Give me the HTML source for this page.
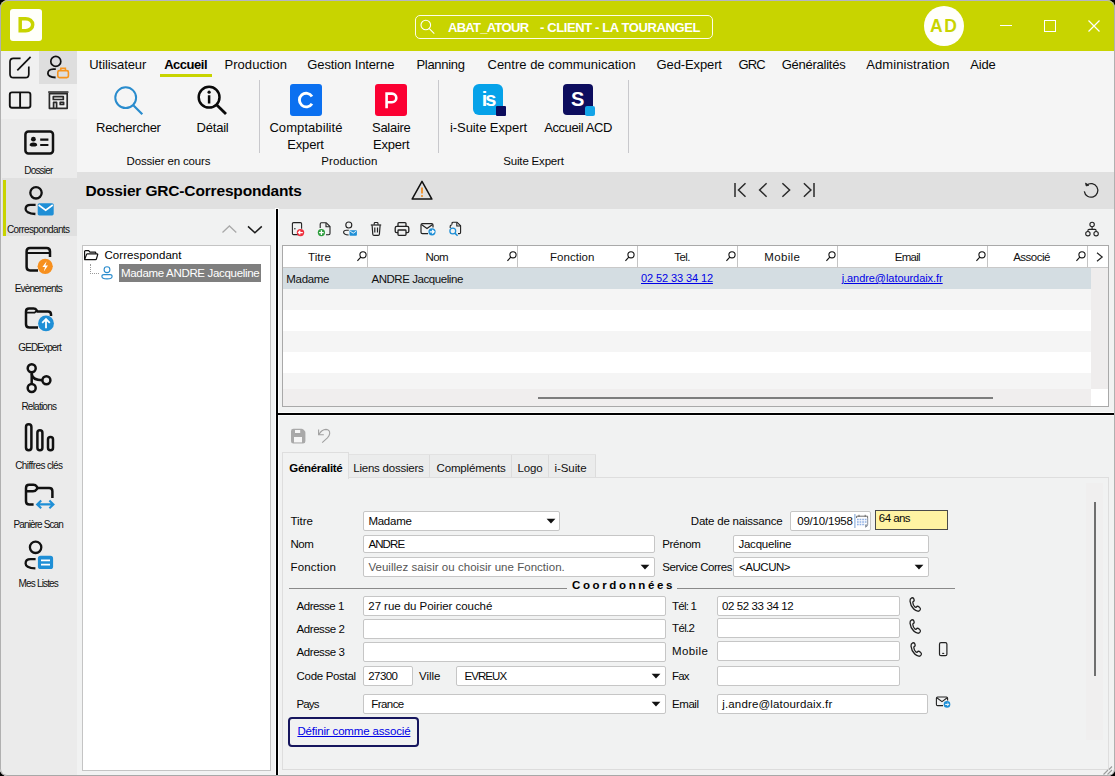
<!DOCTYPE html>
<html><head><meta charset="utf-8"><title>Dossier GRC-Correspondants</title>
<style>
html,body{margin:0;padding:0;}
body{width:1115px;height:776px;overflow:hidden;background:#000;font-family:"Liberation Sans",sans-serif;}
#win{position:absolute;left:0;top:0;width:1115px;height:776px;overflow:hidden;background:#f1f2f2;border-radius:8px 8px 7px 7px;}
.b{position:absolute;box-sizing:border-box;display:block;}
.t{position:absolute;white-space:pre;line-height:20px;font-family:"Liberation Sans",sans-serif;}
.f{position:absolute;box-sizing:border-box;background:#fff;border:1px solid #c6c6c6;border-radius:2px;}
u{text-decoration:underline;}
</style></head><body><div id="win">
<div class="b" style="left:0px;top:0px;width:1115px;height:51px;background:#c8d400;"></div>
<div class="b" style="left:0px;top:51px;width:77px;height:725px;background:#ebebeb;"></div>
<div class="b" style="left:0px;top:51px;width:77px;height:68px;background:#f0f0f0;"></div>
<div class="b" style="left:39px;top:51px;width:38px;height:33px;background:#dedede;"></div>
<div class="b" style="left:77px;top:51px;width:1038px;height:121px;background:#f5f5f5;"></div>
<div class="b" style="left:77px;top:172px;width:1038px;height:37px;background:#e0e0e0;"></div>
<div class="b" style="left:0px;top:0px;width:1115px;height:776px;border:1px solid #b4b4c4;border-radius:8px 8px 7px 7px;border-bottom-color:#a8a8a8;border-left-color:#b0b0b0;border-right-color:#b0b0b0;z-index:50;pointer-events:none;"></div>
<div class="b" style="left:10px;top:9px;width:32px;height:32px;background:#fffffa;border-radius:3px;"></div>
<svg class="b" style="left:10px;top:9px;" width="32" height="32" viewBox="0 0 32 32" preserveAspectRatio="none" fill="none"><path d="M10.2 9.65 H15.7 A7 6.02 0 0 1 15.7 21.7 H10.2 Z" stroke="#c8d400" stroke-width="3.5" stroke-linejoin="miter"/></svg>
<div class="b" style="left:415px;top:15px;width:298px;height:24px;border:1px solid #fdfde8;border-radius:5px;"></div>
<svg class="b" style="left:419px;top:18px;" width="18" height="18" viewBox="0 0 18 18" preserveAspectRatio="none" fill="none"><circle cx="6.8" cy="7" r="4.8" stroke="#fff" stroke-width="1.1"/><path d="M10.3 10.6 L15.3 15.6" stroke="#fff" stroke-width="1.1"/></svg>
<span class="t" style="left:448.00px;top:16px;line-height:23px;font-size:13px;color:#fff;font-weight:bold;letter-spacing:-0.708px;">ABAT_ATOUR</span>
<span class="t" style="left:540.00px;top:16px;line-height:23px;font-size:13px;color:#fff;font-weight:bold;letter-spacing:-0.386px;">- CLIENT - LA TOURANGEL</span>
<div class="b" style="left:924px;top:6px;width:40px;height:40px;background:#fffffb;border-radius:50%;"></div>
<span class="t" style="left:929.90px;top:12px;line-height:28px;font-size:17.5px;color:#c8d400;font-weight:bold;letter-spacing:1.750px;">AD</span>
<div class="b" style="left:1000px;top:25px;width:12px;height:1px;background:#fff;"></div>
<div class="b" style="left:1044px;top:20px;width:12px;height:12px;border:1px solid #fff;"></div>
<svg class="b" style="left:1087px;top:19px;" width="14" height="14" viewBox="0 0 14 14" preserveAspectRatio="none" fill="none"><path d="M1.5 1.5 L12.5 12.5 M12.5 1.5 L1.5 12.5" stroke="#fff" stroke-width="1.2"/></svg>
<span class="t" style="left:89.30px;top:53px;line-height:23px;font-size:13px;color:#080808;letter-spacing:-0.075px;">Utilisateur</span>
<span class="t" style="left:224.50px;top:53px;line-height:23px;font-size:13px;color:#080808;letter-spacing:0.042px;">Production</span>
<span class="t" style="left:307.30px;top:53px;line-height:23px;font-size:13px;color:#080808;letter-spacing:-0.127px;">Gestion Interne</span>
<span class="t" style="left:416.50px;top:53px;line-height:23px;font-size:13px;color:#080808;letter-spacing:-0.318px;">Planning</span>
<span class="t" style="left:487.50px;top:53px;line-height:23px;font-size:13px;color:#080808;">Centre de communication</span>
<span class="t" style="left:656.60px;top:53px;line-height:23px;font-size:13px;color:#080808;letter-spacing:-0.122px;">Ged-Expert</span>
<span class="t" style="left:738.60px;top:53px;line-height:23px;font-size:13px;color:#080808;letter-spacing:-0.900px;">GRC</span>
<span class="t" style="left:781.70px;top:53px;line-height:23px;font-size:13px;color:#080808;letter-spacing:-0.250px;">Généralités</span>
<span class="t" style="left:866.30px;top:53px;line-height:23px;font-size:13px;color:#080808;letter-spacing:0.071px;">Administration</span>
<span class="t" style="left:970.20px;top:53px;line-height:23px;font-size:13px;color:#080808;letter-spacing:-0.167px;">Aide</span>
<span class="t" style="left:164.20px;top:53px;line-height:23px;font-size:13px;color:#000;font-weight:bold;letter-spacing:-0.475px;">Accueil</span>
<div class="b" style="left:160px;top:74px;width:52px;height:3px;background:#c8d400;"></div>
<div class="b" style="left:259px;top:80px;width:1px;height:73px;background:#c8c8cc;"></div>
<div class="b" style="left:438px;top:80px;width:1px;height:73px;background:#c8c8cc;"></div>
<div class="b" style="left:628px;top:80px;width:1px;height:73px;background:#c8c8cc;"></div>
<span class="t" style="left:96.00px;top:116px;line-height:23px;font-size:13px;color:#080808;letter-spacing:-0.250px;">Rechercher</span>
<span class="t" style="left:196.60px;top:116px;line-height:23px;font-size:13px;color:#080808;letter-spacing:-0.230px;">Détail</span>
<span class="t" style="left:269.40px;top:116px;line-height:23px;font-size:13px;color:#080808;letter-spacing:0.077px;">Comptabilité</span>
<span class="t" style="left:287.30px;top:133px;line-height:23px;font-size:13px;color:#080808;letter-spacing:-0.185px;">Expert</span>
<span class="t" style="left:372.00px;top:116px;line-height:23px;font-size:13px;color:#080808;letter-spacing:-0.283px;">Salaire</span>
<span class="t" style="left:372.90px;top:133px;line-height:23px;font-size:13px;color:#080808;letter-spacing:-0.165px;">Expert</span>
<span class="t" style="left:450.00px;top:116px;line-height:23px;font-size:13px;color:#080808;letter-spacing:-0.077px;">i-Suite Expert</span>
<span class="t" style="left:544.20px;top:116px;line-height:23px;font-size:13px;color:#080808;letter-spacing:-0.415px;">Accueil ACD</span>
<span class="t" style="left:126.50px;top:151px;line-height:20px;font-size:11.5px;color:#080808;letter-spacing:-0.157px;">Dossier en cours</span>
<span class="t" style="left:321.30px;top:151px;line-height:20px;font-size:11.5px;color:#080808;letter-spacing:0.122px;">Production</span>
<span class="t" style="left:503.30px;top:151px;line-height:20px;font-size:11.5px;color:#080808;letter-spacing:-0.184px;">Suite Expert</span>
<svg class="b" style="left:112px;top:84px;" width="34" height="34" viewBox="0 0 34 34" preserveAspectRatio="none" fill="none"><circle cx="13.7" cy="13.7" r="10.4" stroke="#2a8ccd" stroke-width="2"/><path d="M21.3 21.3 L30.3 30.3" stroke="#2a8ccd" stroke-width="2.2"/></svg>
<svg class="b" style="left:195px;top:84px;" width="34" height="34" viewBox="0 0 34 34" preserveAspectRatio="none" fill="none"><circle cx="14.1" cy="13.2" r="10.4" stroke="#0a0a0a" stroke-width="2.5"/><path d="M21.8 21 L31 30" stroke="#0a0a0a" stroke-width="2.8"/><circle cx="14.1" cy="8.2" r="1.6" fill="#0a0a0a"/><path d="M14.1 11.2 V19.4" stroke="#0a0a0a" stroke-width="2.5"/></svg>
<div class="b" style="left:290px;top:84px;width:32px;height:32px;background:#0b70f0;border-radius:3px;"></div>
<svg class="b" style="left:290px;top:84px;" width="32" height="32" viewBox="0 0 32 32" preserveAspectRatio="none" fill="none"><path d="M21.97 12.5 A6.8 6.8 0 1 0 21.97 19.7" stroke="#fff" stroke-width="2.9"/></svg>
<div class="b" style="left:375px;top:84px;width:32px;height:32px;background:#fb0032;border-radius:3px;"></div>
<svg class="b" style="left:375px;top:84px;" width="32" height="32" viewBox="0 0 32 32" preserveAspectRatio="none" fill="none"><path d="M11.6 24.2 V9.6 H17 A4.3 4.3 0 0 1 17 18.2 H11.6" stroke="#fff" stroke-width="2.6"/></svg>
<div class="b" style="left:473px;top:84px;width:30px;height:31px;background:#06a2e9;border-radius:6px;"></div>
<span class="t" style="left:481.80px;top:84px;line-height:30px;font-size:20px;color:#fff;font-weight:bold;letter-spacing:-2.000px;">is</span>
<div class="b" style="left:496px;top:106px;width:10px;height:10px;background:#0c0c5c;border-radius:1px;"></div>
<div class="b" style="left:563px;top:84px;width:30px;height:31px;background:#0d0d5e;border-radius:4px;"></div>
<span class="t" style="left:571.00px;top:84px;line-height:30px;font-size:20px;color:#fff;font-weight:bold;">S</span>
<div class="b" style="left:585px;top:106px;width:10px;height:10px;background:#14a4e8;border-radius:2px;"></div>
<span class="t" style="left:85.50px;top:178px;line-height:25px;font-size:15.5px;color:#000;font-weight:bold;letter-spacing:-0.160px;">Dossier GRC-Correspondants</span>
<svg class="b" style="left:410px;top:179px;" width="24" height="22" viewBox="0 0 24 22" preserveAspectRatio="none" fill="none"><path d="M12 2.3 L21.9 20.1 H2.1 Z" stroke="#111" stroke-width="1.5" stroke-linejoin="round"/><path d="M12 8.4 V14.6" stroke="#f08a1c" stroke-width="1.7"/><circle cx="12" cy="17.1" r="1" fill="#f08a1c"/></svg>
<svg class="b" style="left:730px;top:180px;" width="90" height="20" viewBox="0 0 90 20" preserveAspectRatio="none" fill="none"><g stroke="#2a2a2a" stroke-width="1.5" fill="none"><path d="M5 3 V17"/><path d="M15.5 3.3 L8.5 10 L15.5 16.7"/><path d="M36.6 3.3 L29.6 10 L36.6 16.7"/><path d="M52.4 3.3 L59.6 10 L52.4 16.7"/><path d="M73.9 3.3 L80.9 10 L73.9 16.7"/><path d="M84 3 V17"/></g></svg>
<svg class="b" style="left:1081px;top:180px;" width="20" height="20" viewBox="0 0 20 20" preserveAspectRatio="none" fill="none"><path d="M5.6 5.2 A6.8 6.8 0 1 1 3.3 11.4" stroke="#222" stroke-width="1.3"/><path d="M4.5 3.1 L5.2 6 L7.9 5.2 Z" fill="#222" stroke="#222" stroke-width="0.8" stroke-linejoin="round"/></svg>
<svg class="b" style="left:6px;top:54px;" width="28" height="28" viewBox="0 0 28 28" preserveAspectRatio="none" fill="none"><path d="M22.8 12.4 V20.2 Q22.8 23.6 19.4 23.6 H7.4 Q4 23.6 4 20.2 V7.8 Q4 4.4 7.4 4.4 H14.6" stroke="#111" stroke-width="1.7"/><path d="M11.3 16.4 L24.6 2.8" stroke="#111" stroke-width="1.7"/></svg>
<svg class="b" style="left:44px;top:54px;" width="28" height="28" viewBox="0 0 28 28" preserveAspectRatio="none" fill="none"><circle cx="11.8" cy="7.4" r="5" stroke="#111" stroke-width="1.7"/><path d="M11.8 15.2 H9.4 Q3.7 15.4 3.9 19.6 Q4.1 23 11.6 23.5" stroke="#111" stroke-width="1.8"/><rect x="13.8" y="16.6" width="10.6" height="7" rx="1.6" stroke="#f7941d" stroke-width="1.6"/><path d="M16.8 16.4 V14.2 H21.4 V16.4" stroke="#f7941d" stroke-width="1.5"/></svg>
<svg class="b" style="left:6px;top:88px;" width="28" height="24" viewBox="0 0 28 24" preserveAspectRatio="none" fill="none"><rect x="3.8" y="4.4" width="20.6" height="15.4" rx="2.2" stroke="#111" stroke-width="1.9"/><path d="M14.1 4.6 V19.6" stroke="#111" stroke-width="1.9"/></svg>
<svg class="b" style="left:44px;top:88px;" width="28" height="24" viewBox="0 0 28 24" preserveAspectRatio="none" fill="none"><g stroke="#2a2a2a" stroke-width="1.7" stroke-linecap="round" stroke-linejoin="round"><path d="M4.8 4 H23.8"/><path d="M5.4 5.6 H23.2 V20.3 H5.4 Z"/><rect x="9.3" y="8.7" width="10" height="2.8"/><path d="M9.6 20 V14.4 H12.6 V20"/><rect x="16.2" y="14.3" width="3.4" height="2.2"/></g></svg>
<div class="b" style="left:2px;top:178px;width:75px;height:58px;background:#e0e0e0;"></div>
<div class="b" style="left:3px;top:180px;width:3px;height:56px;background:#c8d400;"></div>
<svg class="b" style="left:20px;top:126.6px;" width="40" height="32" viewBox="0 0 40 32" preserveAspectRatio="none" fill="none"><rect x="5.4" y="4.6" width="27.6" height="22" rx="3" stroke="#111" stroke-width="2.5"/><circle cx="13.4" cy="12.2" r="2.4" fill="#111"/><path d="M9.6 18.4 Q9.6 15.6 13.4 15.6 Q17.2 15.6 17.2 18.4 Q13.4 20.8 9.6 18.4 Z" fill="#111"/><path d="M20.2 12.7 H28.4 M20.2 18 H28.4" stroke="#111" stroke-width="2.2"/></svg>
<svg class="b" style="left:20px;top:182px;" width="40" height="38" viewBox="0 0 40 38" preserveAspectRatio="none" fill="none"><circle cx="16" cy="10.8" r="5.7" stroke="#111" stroke-width="2.3"/><path d="M15.6 22.8 H10.6 Q5.6 22.8 5.6 27 Q5.6 31.4 15.4 32" stroke="#111" stroke-width="2.3"/><rect x="17.7" y="21.2" width="16" height="12.2" rx="1.6" fill="#1f8fd6"/><path d="M18.6 23 L25.7 28.2 L32.8 23" stroke="#fff" stroke-width="1.6"/></svg>
<svg class="b" style="left:20px;top:242px;" width="40" height="36" viewBox="0 0 40 36" preserveAspectRatio="none" fill="none"><path d="M18 28.4 H10 Q6.6 28.4 6.6 25 V9.4 Q6.6 6 10 6 H26.6 Q30 6 30 9.4 V15" stroke="#111" stroke-width="2.5"/><path d="M6.8 11 H29.8" stroke="#111" stroke-width="2"/><circle cx="25.2" cy="24.3" r="7.6" fill="#f7901e"/><path d="M26.6 19.2 L22.4 25 H25 L23.8 29.4 L28 23.4 H25.4 Z" fill="#fff"/></svg>
<svg class="b" style="left:20px;top:302px;" width="40" height="36" viewBox="0 0 40 36" preserveAspectRatio="none" fill="none"><path d="M18 25.6 H9.4 Q6 25.6 6 22.2 V9.4 Q6 6.6 9 6.6 H13.6 Q15.6 6.6 16.6 8.2 L17.4 9.4 H28 Q31 9.4 31 12.4 V14" stroke="#111" stroke-width="2.5"/><path d="M6.2 10.6 H14.6 L17.2 8.4" stroke="#111" stroke-width="1.8"/><circle cx="26" cy="21.4" r="7.9" fill="#1f8fd6"/><path d="M26 26.2 V17.2 M22.2 20.8 L26 17 L29.8 20.8" stroke="#fff" stroke-width="1.8"/></svg>
<svg class="b" style="left:20px;top:360px;" width="40" height="36" viewBox="0 0 40 36" preserveAspectRatio="none" fill="none"><circle cx="11.7" cy="8.2" r="4" stroke="#111" stroke-width="2.5"/><circle cx="11.7" cy="28" r="4" stroke="#111" stroke-width="2.5"/><circle cx="26.4" cy="20.2" r="4" stroke="#111" stroke-width="2.5"/><path d="M11.7 12.4 V23.8" stroke="#111" stroke-width="2.5"/><path d="M11.7 14 Q12.4 20.2 22.2 20.2" stroke="#111" stroke-width="2.5"/></svg>
<svg class="b" style="left:20px;top:418px;" width="40" height="38" viewBox="0 0 40 38" preserveAspectRatio="none" fill="none"><rect x="6" y="6.2" width="5.4" height="26" rx="2.7" stroke="#111" stroke-width="2.5"/><rect x="17.4" y="12.2" width="5" height="20" rx="2.5" stroke="#111" stroke-width="2.5"/><rect x="28" y="19" width="5" height="13.2" rx="2.5" stroke="#111" stroke-width="2.5"/></svg>
<svg class="b" style="left:20px;top:478px;" width="40" height="36" viewBox="0 0 40 36" preserveAspectRatio="none" fill="none"><path d="M13.6 26.6 H9.4 Q6 26.6 6 23.2 V10 Q6 6.8 9.2 6.8 H13.4 Q15.6 6.8 16.6 8.4 L17.6 10 H29.2 Q32.4 10 32.4 13.2 V20" stroke="#111" stroke-width="2.5"/><path d="M6.2 13.2 H13 Q15.4 13.2 16.4 11.6 L17.4 10.2" stroke="#111" stroke-width="2.5"/><path d="M17.4 26.4 H33 M21.2 22.6 L17.2 26.4 L21.2 30.2 M29.4 22.6 L33.4 26.4 L29.4 30.2" stroke="#1f8fd6" stroke-width="2.1"/></svg>
<svg class="b" style="left:20px;top:536px;" width="40" height="38" viewBox="0 0 40 38" preserveAspectRatio="none" fill="none"><circle cx="15.6" cy="11.3" r="5.7" stroke="#111" stroke-width="2.3"/><path d="M15.6 23.2 H10.6 Q5.6 23.2 5.6 27.4 Q5.6 31.8 15.4 32.4" stroke="#111" stroke-width="2.3"/><rect x="17.9" y="19.8" width="15.2" height="13.2" rx="2.6" fill="#1f8fd6"/><path d="M21 24.4 H30 M21 28.6 H30" stroke="#fff" stroke-width="1.9"/></svg>
<span class="t" style="left:24.30px;top:161px;line-height:19px;font-size:10px;color:#111;letter-spacing:-0.829px;">Dossier</span>
<span class="t" style="left:7.00px;top:220px;line-height:19px;font-size:10px;color:#111;letter-spacing:-0.625px;">Correspondants</span>
<span class="t" style="left:14.70px;top:279px;line-height:19px;font-size:10px;color:#111;letter-spacing:-0.847px;">Evènements</span>
<span class="t" style="left:18.30px;top:338px;line-height:19px;font-size:10px;color:#111;letter-spacing:-0.900px;">GEDExpert</span>
<span class="t" style="left:21.40px;top:397px;line-height:19px;font-size:10px;color:#111;letter-spacing:-0.769px;">Relations</span>
<span class="t" style="left:15.20px;top:456px;line-height:19px;font-size:10px;color:#111;letter-spacing:-0.581px;">Chiffres clés</span>
<span class="t" style="left:13.60px;top:515px;line-height:19px;font-size:10px;color:#111;letter-spacing:-0.900px;">Panière Scan</span>
<span class="t" style="left:18.60px;top:574px;line-height:19px;font-size:10px;color:#111;letter-spacing:-0.839px;">Mes Listes</span>
<div class="b" style="left:275px;top:208px;width:4px;height:567px;background:#fcfcfc;"></div>
<div class="b" style="left:278px;top:412px;width:836px;height:4px;background:#fcfcfc;"></div>
<div class="b" style="left:276px;top:209px;width:2px;height:566px;background:#000;"></div>
<div class="b" style="left:278px;top:413px;width:836px;height:2px;background:#000;"></div>
<svg class="b" style="left:220px;top:222px;" width="44" height="14" viewBox="0 0 44 14" preserveAspectRatio="none" fill="none"><path d="M2.5 10.4 L9.4 4 L16.3 10.4" stroke="#a9a9a9" stroke-width="1.3"/><path d="M28 4.4 L34.9 10.8 L41.8 4.4" stroke="#1c1c1c" stroke-width="1.5"/></svg>
<div class="b" style="left:82px;top:245px;width:189px;height:526px;background:#fff;border:1px solid #c4c4c4;"></div>
<svg class="b" style="left:82px;top:248px;" width="18" height="14" viewBox="0 0 18 14" preserveAspectRatio="none" fill="none"><path d="M2.6 11.2 V3.6 Q2.6 2.6 3.6 2.6 H6.6 L8 4.2 H13 Q13.8 4.2 13.8 5 V5.8" stroke="#111" stroke-width="1.2"/><path d="M2.6 11.6 L4.6 6.4 Q4.8 5.9 5.4 5.9 H15.2 Q15.9 5.9 15.7 6.6 L14.4 11 Q14.2 11.7 13.5 11.7 H3 Z" stroke="#111" stroke-width="1.2" stroke-linejoin="round"/></svg>
<span class="t" style="left:104.40px;top:245px;line-height:20px;font-size:11.5px;color:#000;letter-spacing:0.090px;">Correspondant</span>
<div class="b" style="left:90px;top:264px;width:1px;height:10px;border-left:1px dotted #9a9a9a;"></div>
<div class="b" style="left:90px;top:273px;width:9px;height:1px;border-top:1px dotted #9a9a9a;"></div>
<svg class="b" style="left:100px;top:265px;" width="14" height="16" viewBox="0 0 14 16" preserveAspectRatio="none" fill="none"><circle cx="7" cy="4.7" r="2.9" stroke="#2a8ccd" stroke-width="1.1"/><path d="M1.9 11.4 Q1.9 9.6 4 9.6 H10 Q12.1 9.6 12.1 11.4 Q12.1 13.9 7 13.9 Q1.9 13.9 1.9 11.4 Z" stroke="#2a8ccd" stroke-width="1.1"/></svg>
<div class="b" style="left:119px;top:264px;width:142px;height:18px;background:#7f7f7f;"></div>
<span class="t" style="left:121.00px;top:263px;line-height:20px;font-size:11.5px;color:#fff;letter-spacing:-0.320px;">Madame ANDRE Jacqueline</span>
<svg class="b" style="left:289px;top:220px;" width="18" height="18" viewBox="0 0 18 18" preserveAspectRatio="none" fill="none"><path d="M9.4 14.6 H4.6 Q3.4 14.6 3.4 13.4 V3.8 Q3.4 2.6 4.6 2.6 H11.4 Q12.6 2.6 12.6 3.8 V8.8" stroke="#222" stroke-width="1.1"/><circle cx="5.9" cy="8.7" r="0.75" fill="#222"/><circle cx="11.5" cy="12.6" r="3.7" fill="#ee2f3c"/><path d="M13.8 12.6 H9.8 M11.3 10.8 L9.5 12.6 L11.3 14.4" stroke="#fff" stroke-width="1.3"/></svg>
<svg class="b" style="left:316px;top:220px;" width="18" height="18" viewBox="0 0 18 18" preserveAspectRatio="none" fill="none"><path d="M4.2 8 V3.9 Q4.2 2.7 5.4 2.7 H10.2 L14 6.5 V13.6 Q14 14.8 12.8 14.8 H10" stroke="#222" stroke-width="1.1"/><path d="M10 2.9 V6.7 H13.8" stroke="#222" stroke-width="1.1"/><circle cx="5.4" cy="12.6" r="3.6" fill="#2e9e3e"/><path d="M5.4 10.3 V14.9 M3.1 12.6 H7.7" stroke="#fff" stroke-width="1.3"/></svg>
<svg class="b" style="left:342px;top:220px;" width="18" height="18" viewBox="0 0 18 18" preserveAspectRatio="none" fill="none"><circle cx="6.8" cy="5" r="3" stroke="#222" stroke-width="1.1"/><path d="M6.8 10.2 H4.4 Q1.6 10.2 1.6 12.2 Q1.6 14.6 6.6 15" stroke="#222" stroke-width="1.1"/><rect x="7.5" y="10.2" width="7.4" height="5.5" rx="0.8" fill="#1f8fd6"/><path d="M8.2 11.2 L11.2 13.2 L14.2 11.2" stroke="#fff" stroke-width="0.9"/></svg>
<svg class="b" style="left:368px;top:220px;" width="18" height="18" viewBox="0 0 18 18" preserveAspectRatio="none" fill="none"><path d="M2.8 5 H13.2" stroke="#222" stroke-width="1.2"/><path d="M6.2 4.8 V3.4 Q6.2 2.5 7.1 2.5 H9.1 Q10 2.5 10 3.4 V4.8" stroke="#222" stroke-width="1.1"/><path d="M4.1 5.2 L4.8 14.2 Q4.9 15.3 6 15.3 H10.2 Q11.3 15.3 11.4 14.2 L12.1 5.2" stroke="#222" stroke-width="1.2"/><path d="M6.8 7.6 V12.6 M9.5 7.6 V12.6" stroke="#222" stroke-width="1.2"/></svg>
<svg class="b" style="left:393px;top:220px;" width="18" height="18" viewBox="0 0 18 18" preserveAspectRatio="none" fill="none"><path d="M5 6.2 V3.6 Q5 2.6 6 2.6 H12 Q13 2.6 13 3.6 V6.2" stroke="#222" stroke-width="1.3"/><path d="M5 12.6 H3.6 Q2.2 12.6 2.2 11.2 V8 Q2.2 6.4 3.8 6.4 H14.2 Q15.8 6.4 15.8 8 V11.2 Q15.8 12.6 14.4 12.6 H13" stroke="#222" stroke-width="1.3"/><rect x="5" y="10" width="8" height="5.4" rx="0.8" stroke="#222" stroke-width="1.3"/></svg>
<svg class="b" style="left:419px;top:220px;" width="18" height="18" viewBox="0 0 18 18" preserveAspectRatio="none" fill="none"><path d="M9 13.6 H3.4 Q2 13.6 2 12.2 V5 Q2 3.6 3.4 3.6 H12.6 Q14 3.6 14 5 V7.4" stroke="#222" stroke-width="1.2"/><path d="M2.4 4.4 L8 8.6 L13.6 4.4" stroke="#222" stroke-width="1.2"/><circle cx="13" cy="11.8" r="3.6" fill="#1f8fd6"/><path d="M10.8 11.8 H14.8 M13.2 10 L15 11.8 L13.2 13.6" stroke="#fff" stroke-width="1.3"/></svg>
<svg class="b" style="left:446px;top:220px;" width="18" height="18" viewBox="0 0 18 18" preserveAspectRatio="none" fill="none"><path d="M6 4.4 V3.4 Q6 2.2 7.2 2.2 H11 L14.6 5.8 V12.4 Q14.6 13.6 13.4 13.6 H12" stroke="#222" stroke-width="1.1"/><path d="M10.8 2.4 V6 H14.4" stroke="#222" stroke-width="1.1"/><path d="M4.2 8 V6 Q4.2 5 5.2 5 H6" stroke="#222" stroke-width="1.1"/><circle cx="6.8" cy="11" r="2.9" stroke="#1f8fd6" stroke-width="1.3"/><path d="M8.9 13.1 L11.6 15.8" stroke="#1f8fd6" stroke-width="1.5"/></svg>
<svg class="b" style="left:1084px;top:220px;" width="18" height="18" viewBox="0 0 18 18" preserveAspectRatio="none" fill="none"><g stroke="#222" stroke-width="1.1"><circle cx="8.1" cy="4.5" r="2.2"/><circle cx="3.9" cy="13.7" r="2.2"/><circle cx="12.1" cy="13.7" r="2.2"/><path d="M8.1 6.8 V9.4 M3.9 11.4 V10.6 Q3.9 9.4 5.1 9.4 H11 Q12.1 9.4 12.1 10.6 V11.4"/></g></svg>
<div class="b" style="left:282px;top:245px;width:827px;height:162px;background:#fff;border:1px solid #a9a9a9;"></div>
<div class="b" style="left:283px;top:267px;width:808px;height:22px;background:#d4dde2;"></div>
<div class="b" style="left:283px;top:289px;width:808px;height:21px;background:#f5f5f5;"></div>
<div class="b" style="left:283px;top:331px;width:808px;height:21px;background:#f5f5f5;"></div>
<div class="b" style="left:283px;top:373px;width:808px;height:16px;background:#f5f5f5;"></div>
<div class="b" style="left:1091px;top:267px;width:17px;height:122px;background:#efeded;"></div>
<div class="b" style="left:283px;top:389px;width:808px;height:17px;background:#f0eeee;"></div>
<div class="b" style="left:538px;top:397px;width:455px;height:2px;background:#7d7d7d;"></div>
<div class="b" style="left:283px;top:267px;width:825px;height:1px;background:#c9c9c9;"></div>
<div class="b" style="left:367px;top:246px;width:1px;height:21px;background:#c4c4c4;"></div>
<div class="b" style="left:517px;top:246px;width:1px;height:21px;background:#c4c4c4;"></div>
<div class="b" style="left:637px;top:246px;width:1px;height:21px;background:#c4c4c4;"></div>
<div class="b" style="left:737px;top:246px;width:1px;height:21px;background:#c4c4c4;"></div>
<div class="b" style="left:837px;top:246px;width:1px;height:21px;background:#c4c4c4;"></div>
<div class="b" style="left:987px;top:246px;width:1px;height:21px;background:#c4c4c4;"></div>
<div class="b" style="left:1087px;top:246px;width:1px;height:21px;background:#c4c4c4;"></div>
<span class="t" style="left:308.00px;top:247px;line-height:20px;font-size:11.5px;color:#111;letter-spacing:0.069px;">Titre</span>
<span class="t" style="left:425.60px;top:247px;line-height:20px;font-size:11.5px;color:#111;letter-spacing:-0.625px;">Nom</span>
<span class="t" style="left:550.00px;top:247px;line-height:20px;font-size:11.5px;color:#111;letter-spacing:0.039px;">Fonction</span>
<span class="t" style="left:674.20px;top:247px;line-height:20px;font-size:11.5px;color:#111;letter-spacing:-0.558px;">Tel.</span>
<span class="t" style="left:764.30px;top:247px;line-height:20px;font-size:11.5px;color:#111;letter-spacing:0.325px;">Mobile</span>
<span class="t" style="left:894.70px;top:247px;line-height:20px;font-size:11.5px;color:#111;letter-spacing:-0.713px;">Email</span>
<span class="t" style="left:1013.20px;top:247px;line-height:20px;font-size:11.5px;color:#111;letter-spacing:-0.508px;">Associé</span>
<svg class="b" style="left:355.6px;top:250px;" width="12" height="12" viewBox="0 0 12 12" preserveAspectRatio="none" fill="none"><circle cx="7" cy="4.8" r="3.1" stroke="#111" stroke-width="1.1"/><path d="M4.8 7.2 L1.4 10.8" stroke="#111" stroke-width="1.2"/></svg>
<svg class="b" style="left:505.6px;top:250px;" width="12" height="12" viewBox="0 0 12 12" preserveAspectRatio="none" fill="none"><circle cx="7" cy="4.8" r="3.1" stroke="#111" stroke-width="1.1"/><path d="M4.8 7.2 L1.4 10.8" stroke="#111" stroke-width="1.2"/></svg>
<svg class="b" style="left:624.2px;top:250px;" width="12" height="12" viewBox="0 0 12 12" preserveAspectRatio="none" fill="none"><circle cx="7" cy="4.8" r="3.1" stroke="#111" stroke-width="1.1"/><path d="M4.8 7.2 L1.4 10.8" stroke="#111" stroke-width="1.2"/></svg>
<svg class="b" style="left:724.8px;top:250px;" width="12" height="12" viewBox="0 0 12 12" preserveAspectRatio="none" fill="none"><circle cx="7" cy="4.8" r="3.1" stroke="#111" stroke-width="1.1"/><path d="M4.8 7.2 L1.4 10.8" stroke="#111" stroke-width="1.2"/></svg>
<svg class="b" style="left:825px;top:250px;" width="12" height="12" viewBox="0 0 12 12" preserveAspectRatio="none" fill="none"><circle cx="7" cy="4.8" r="3.1" stroke="#111" stroke-width="1.1"/><path d="M4.8 7.2 L1.4 10.8" stroke="#111" stroke-width="1.2"/></svg>
<svg class="b" style="left:974.8px;top:250px;" width="12" height="12" viewBox="0 0 12 12" preserveAspectRatio="none" fill="none"><circle cx="7" cy="4.8" r="3.1" stroke="#111" stroke-width="1.1"/><path d="M4.8 7.2 L1.4 10.8" stroke="#111" stroke-width="1.2"/></svg>
<svg class="b" style="left:1075px;top:250px;" width="12" height="12" viewBox="0 0 12 12" preserveAspectRatio="none" fill="none"><circle cx="7" cy="4.8" r="3.1" stroke="#111" stroke-width="1.1"/><path d="M4.8 7.2 L1.4 10.8" stroke="#111" stroke-width="1.2"/></svg>
<svg class="b" style="left:1093px;top:250px;" width="12" height="14" viewBox="0 0 12 14" preserveAspectRatio="none" fill="none"><path d="M4 2.8 L9.2 7 L4 11.2" stroke="#222" stroke-width="1.2"/></svg>
<span class="t" style="left:286.30px;top:269px;line-height:20px;font-size:11.5px;color:#111;letter-spacing:-0.310px;">Madame</span>
<span class="t" style="left:371.40px;top:269px;line-height:20px;font-size:11.5px;color:#111;letter-spacing:-0.433px;">ANDRE Jacqueline</span>
<span class="t" style="left:641.00px;top:268px;line-height:20px;font-size:11px;color:#0000e6;letter-spacing:-0.106px;text-decoration:underline;">02 52 33 34 12</span>
<span class="t" style="left:841.67px;top:268px;line-height:20px;font-size:11px;color:#0000e6;letter-spacing:-0.061px;text-decoration:underline;">j.andre@latourdaix.fr</span>
<svg class="b" style="left:289px;top:427px;" width="18" height="18" viewBox="0 0 18 18" preserveAspectRatio="none" fill="none"><path d="M2 4.2 Q2 1.8 4.4 1.8 H12.6 Q13.6 1.8 14.4 2.6 L15.6 3.8 Q16.4 4.6 16.4 5.6 V14.2 Q16.4 16.6 14 16.6 H4.4 Q2 16.6 2 14.2 Z" fill="#a9a9a9"/><rect x="6" y="3" width="5.2" height="3.2" fill="#f6f6f6"/><rect x="6" y="6.4" width="5.4" height="0.8" fill="#9a9a9a"/><rect x="5" y="10" width="8" height="5.4" fill="#f6f6f6"/></svg>
<svg class="b" style="left:316px;top:427px;" width="18" height="18" viewBox="0 0 18 18" preserveAspectRatio="none" fill="none"><path d="M2.6 2.4 V7.8 H7.8" stroke="#a0a0a0" stroke-width="1.1"/><path d="M3 7.4 Q5.6 2.6 10 2.4 Q14 2.6 13.7 6.6 Q13.4 8.8 11.4 10.8 L6.2 15.7" stroke="#a0a0a0" stroke-width="1.1"/></svg>
<div class="b" style="left:349px;top:454px;width:247px;height:24px;background:#ebecec;border-top:1px solid #e2e2e2;"></div>
<div class="b" style="left:429px;top:455px;width:1px;height:23px;background:#dcdcdc;"></div>
<div class="b" style="left:511px;top:455px;width:1px;height:23px;background:#dcdcdc;"></div>
<div class="b" style="left:548px;top:455px;width:1px;height:23px;background:#dcdcdc;"></div>
<div class="b" style="left:595px;top:455px;width:1px;height:23px;background:#dcdcdc;"></div>
<div class="b" style="left:282px;top:452px;width:67px;height:27px;background:#f1f2f2;border:1px solid #dedede;border-bottom:none;"></div>
<div class="b" style="left:349px;top:477px;width:760px;height:1px;background:#dedede;"></div>
<div class="b" style="left:282px;top:478px;width:1px;height:292px;background:#dedede;"></div>
<div class="b" style="left:1108px;top:478px;width:1px;height:292px;background:#dedede;"></div>
<div class="b" style="left:282px;top:769px;width:827px;height:1px;background:#dcdcdc;"></div>
<span class="t" style="left:289.30px;top:458px;line-height:20px;font-size:11.5px;color:#000;font-weight:bold;letter-spacing:-0.317px;">Généralité</span>
<span class="t" style="left:353.30px;top:458px;line-height:20px;font-size:11.5px;color:#111;letter-spacing:-0.231px;">Liens dossiers</span>
<span class="t" style="left:436.60px;top:458px;line-height:20px;font-size:11.5px;color:#111;letter-spacing:-0.180px;">Compléments</span>
<span class="t" style="left:517.40px;top:458px;line-height:20px;font-size:11.5px;color:#111;letter-spacing:-0.108px;">Logo</span>
<span class="t" style="left:554.60px;top:458px;line-height:20px;font-size:11.5px;color:#111;letter-spacing:-0.104px;">i-Suite</span>
<div class="b" style="left:1086px;top:483px;width:17px;height:257px;background:#f0efef;"></div>
<div class="b" style="left:1094px;top:502px;width:2px;height:174px;background:#6f6f6f;"></div>
<span class="t" style="left:290.50px;top:511px;line-height:20px;font-size:11.5px;color:#080808;letter-spacing:-0.031px;">Titre</span>
<div class="f" style="left:363px;top:511px;width:197px;height:20px;"></div>
<span class="t" style="left:368.40px;top:511px;line-height:20px;font-size:11.5px;color:#080808;letter-spacing:-0.250px;">Madame</span>
<svg class="b" style="left:545.5px;top:518px;" width="10" height="6" viewBox="0 0 10 6" preserveAspectRatio="none" fill="none"><path d="M0.6 0.8 H9.4 L5 5.4 Z" fill="#111"/></svg>
<span class="t" style="left:690.80px;top:511px;line-height:20px;font-size:11.5px;color:#080808;letter-spacing:-0.216px;">Date de naissance</span>
<div class="f" style="left:790px;top:511px;width:81px;height:20px;"></div>
<span class="t" style="left:797.20px;top:511px;line-height:20px;font-size:11.5px;color:#080808;letter-spacing:-0.203px;">09/10/1958</span>
<svg class="b" style="left:854px;top:513px;" width="16" height="16" viewBox="0 0 16 16" preserveAspectRatio="none" fill="none"><path d="M0.9 1 V15" stroke="#8fb0dc" stroke-width="1.2"/><rect x="2.4" y="3.2" width="11.4" height="11" fill="#fdfdfe"/><path d="M2.6 5 V3.2 H13.6 V5" stroke="#6d6d6d" stroke-width="1"/><path d="M5 1.8 V4 M11.2 1.8 V4" stroke="#6d6d6d" stroke-width="1"/><path d="M3 6.6 H13 M3 9 H13 M3 11.4 H11" stroke="#8fb0e4" stroke-width="1.5" stroke-dasharray="1.7 0.9"/><path d="M13.7 5 V11.4 Q13.6 13.8 11 14.2" stroke="#8a919c" stroke-width="1"/><path d="M13.6 11.4 L11.2 14.2 L11.2 11.6 Z" fill="#7d8794"/></svg>
<div class="b" style="left:875px;top:510px;width:73px;height:20px;background:#fff3a3;border:1px solid #4a4a4a;"></div>
<span class="t" style="left:878.80px;top:508px;line-height:20px;font-size:11.5px;color:#080808;letter-spacing:-0.540px;">64 ans</span>
<span class="t" style="left:290.50px;top:534px;line-height:20px;font-size:11.5px;color:#080808;letter-spacing:-0.525px;">Nom</span>
<div class="f" style="left:363px;top:535px;width:292px;height:18px;"></div>
<span class="t" style="left:368.40px;top:534px;line-height:20px;font-size:11.5px;color:#080808;letter-spacing:-0.900px;">ANDRE</span>
<span class="t" style="left:662.30px;top:534px;line-height:20px;font-size:11.5px;color:#080808;letter-spacing:-0.350px;">Prénom</span>
<div class="f" style="left:733px;top:535px;width:196px;height:18px;"></div>
<span class="t" style="left:738.40px;top:534px;line-height:20px;font-size:11.5px;color:#080808;letter-spacing:-0.211px;">Jacqueline</span>
<span class="t" style="left:290.50px;top:557px;line-height:20px;font-size:11.5px;color:#080808;letter-spacing:0.182px;">Fonction</span>
<div class="f" style="left:363px;top:557px;width:292px;height:20px;"></div>
<span class="t" style="left:368.40px;top:557px;line-height:20px;font-size:11.5px;color:#555;letter-spacing:0.036px;">Veuillez saisir ou choisir une Fonction.</span>
<svg class="b" style="left:640px;top:563.6px;" width="10" height="6" viewBox="0 0 10 6" preserveAspectRatio="none" fill="none"><path d="M0.6 0.8 H9.4 L5 5.4 Z" fill="#111"/></svg>
<span class="t" style="left:662.30px;top:557px;line-height:20px;font-size:11.5px;color:#080808;letter-spacing:-0.454px;">Service Corres</span>
<div class="f" style="left:733px;top:557px;width:196px;height:20px;"></div>
<span class="t" style="left:739.00px;top:557px;line-height:20px;font-size:11.5px;color:#080808;letter-spacing:-0.462px;">&lt;AUCUN&gt;</span>
<svg class="b" style="left:914px;top:563.6px;" width="10" height="6" viewBox="0 0 10 6" preserveAspectRatio="none" fill="none"><path d="M0.6 0.8 H9.4 L5 5.4 Z" fill="#111"/></svg>
<div class="b" style="left:289px;top:588px;width:278px;height:1px;background:#8a8a8a;"></div>
<div class="b" style="left:677px;top:588px;width:278px;height:1px;background:#8a8a8a;"></div>
<span class="t" style="left:572.00px;top:575px;line-height:20px;font-size:11.5px;color:#000;font-weight:bold;letter-spacing:2.628px;">Coordonnées</span>
<span class="t" style="left:296.60px;top:596px;line-height:20px;font-size:11.5px;color:#080808;letter-spacing:-0.506px;">Adresse 1</span>
<div class="f" style="left:363px;top:596px;width:303px;height:20px;"></div>
<span class="t" style="left:368.30px;top:596px;line-height:20px;font-size:11.5px;color:#080808;letter-spacing:-0.054px;">27 rue du Poirier couché</span>
<span class="t" style="left:296.60px;top:619px;line-height:20px;font-size:11.5px;color:#080808;letter-spacing:-0.444px;">Adresse 2</span>
<div class="f" style="left:363px;top:619px;width:303px;height:20px;"></div>
<span class="t" style="left:296.60px;top:642px;line-height:20px;font-size:11.5px;color:#080808;letter-spacing:-0.444px;">Adresse 3</span>
<div class="f" style="left:363px;top:642px;width:303px;height:20px;"></div>
<span class="t" style="left:296.60px;top:666px;line-height:20px;font-size:11.5px;color:#080808;letter-spacing:-0.323px;">Code Postal</span>
<div class="f" style="left:363px;top:666px;width:50px;height:20px;"></div>
<span class="t" style="left:368.30px;top:666px;line-height:20px;font-size:11.5px;color:#080808;letter-spacing:-0.575px;">27300</span>
<span class="t" style="left:419.00px;top:666px;line-height:20px;font-size:11.5px;color:#080808;letter-spacing:-0.025px;">Ville</span>
<div class="f" style="left:456px;top:666px;width:210px;height:20px;"></div>
<span class="t" style="left:464.40px;top:666px;line-height:20px;font-size:11.5px;color:#080808;letter-spacing:-0.900px;">EVREUX</span>
<svg class="b" style="left:650.5px;top:673px;" width="10" height="6" viewBox="0 0 10 6" preserveAspectRatio="none" fill="none"><path d="M0.6 0.8 H9.4 L5 5.4 Z" fill="#111"/></svg>
<span class="t" style="left:296.60px;top:694px;line-height:20px;font-size:11.5px;color:#080808;letter-spacing:-0.900px;">Pays</span>
<div class="f" style="left:363px;top:694px;width:303px;height:20px;"></div>
<span class="t" style="left:371.20px;top:694px;line-height:20px;font-size:11.5px;color:#080808;letter-spacing:-0.550px;">France</span>
<svg class="b" style="left:650.5px;top:701px;" width="10" height="6" viewBox="0 0 10 6" preserveAspectRatio="none" fill="none"><path d="M0.6 0.8 H9.4 L5 5.4 Z" fill="#111"/></svg>
<span class="t" style="left:672.10px;top:596px;line-height:20px;font-size:11.5px;color:#080808;letter-spacing:-0.790px;">Tél: 1</span>
<div class="f" style="left:717px;top:596px;width:183px;height:20px;"></div>
<span class="t" style="left:721.90px;top:596px;line-height:20px;font-size:11.5px;color:#080808;letter-spacing:-0.381px;">02 52 33 34 12</span>
<span class="t" style="left:672.10px;top:618px;line-height:20px;font-size:11.5px;color:#080808;letter-spacing:-0.681px;">Tél.2</span>
<div class="f" style="left:717px;top:618px;width:183px;height:20px;"></div>
<span class="t" style="left:672.10px;top:641px;line-height:20px;font-size:11.5px;color:#080808;letter-spacing:0.385px;">Mobile</span>
<div class="f" style="left:717px;top:641px;width:183px;height:20px;"></div>
<span class="t" style="left:672.10px;top:666px;line-height:20px;font-size:11.5px;color:#080808;letter-spacing:-0.900px;">Fax</span>
<div class="f" style="left:717px;top:666px;width:183px;height:20px;"></div>
<span class="t" style="left:672.10px;top:694px;line-height:20px;font-size:11.5px;color:#080808;letter-spacing:-0.463px;">Email</span>
<div class="f" style="left:717px;top:694px;width:211px;height:20px;"></div>
<span class="t" style="left:722.27px;top:694px;line-height:20px;font-size:11.5px;color:#080808;letter-spacing:0.152px;">j.andre@latourdaix.fr</span>
<svg class="b" style="left:907.2px;top:596.4px;" width="17.2" height="18.4" viewBox="0 0 16 16" preserveAspectRatio="none" fill="none"><path d="M4.4 1.6 Q2.6 2.4 2.8 4.4 Q3.2 8.4 6.2 11.2 Q8 12.8 10 13.2 Q11.8 13.4 12.4 11.8 Q12.8 10.6 11.6 9.8 L10.4 9 Q9.4 8.6 8.8 9.4 Q8.2 10.2 7.4 9.6 Q5.6 8 5.4 5.6 Q5.4 4.8 6.2 4.6 Q7 4.2 6.6 3.2 L6.2 2.2 Q5.6 1.2 4.4 1.6 Z" stroke="#222" stroke-width="1.2" stroke-linejoin="round"/></svg>
<svg class="b" style="left:907.2px;top:618.4px;" width="17.2" height="18.4" viewBox="0 0 16 16" preserveAspectRatio="none" fill="none"><path d="M4.4 1.6 Q2.6 2.4 2.8 4.4 Q3.2 8.4 6.2 11.2 Q8 12.8 10 13.2 Q11.8 13.4 12.4 11.8 Q12.8 10.6 11.6 9.8 L10.4 9 Q9.4 8.6 8.8 9.4 Q8.2 10.2 7.4 9.6 Q5.6 8 5.4 5.6 Q5.4 4.8 6.2 4.6 Q7 4.2 6.6 3.2 L6.2 2.2 Q5.6 1.2 4.4 1.6 Z" stroke="#222" stroke-width="1.2" stroke-linejoin="round"/></svg>
<svg class="b" style="left:908.2px;top:641.2px;" width="17.2" height="18.4" viewBox="0 0 16 16" preserveAspectRatio="none" fill="none"><path d="M4.4 1.6 Q2.6 2.4 2.8 4.4 Q3.2 8.4 6.2 11.2 Q8 12.8 10 13.2 Q11.8 13.4 12.4 11.8 Q12.8 10.6 11.6 9.8 L10.4 9 Q9.4 8.6 8.8 9.4 Q8.2 10.2 7.4 9.6 Q5.6 8 5.4 5.6 Q5.4 4.8 6.2 4.6 Q7 4.2 6.6 3.2 L6.2 2.2 Q5.6 1.2 4.4 1.6 Z" stroke="#222" stroke-width="1.2" stroke-linejoin="round"/></svg>
<svg class="b" style="left:936px;top:641px;" width="14" height="17" viewBox="0 0 14 17" preserveAspectRatio="none" fill="none"><rect x="3.5" y="1.7" width="7.4" height="13" rx="1.5" stroke="#222" stroke-width="1.2"/><path d="M6.2 12.4 H8.2" stroke="#222" stroke-width="1.1"/></svg>
<svg class="b" style="left:934px;top:694px;" width="18" height="16" viewBox="0 0 18 16" preserveAspectRatio="none" fill="none"><path d="M9 11.6 H3.6 Q2.4 11.6 2.4 10.4 V4.2 Q2.4 3 3.6 3 H12.4 Q13.6 3 13.6 4.2 V6.6" stroke="#222" stroke-width="1.1"/><path d="M2.8 3.8 L8 7.6 L13.2 3.8" stroke="#222" stroke-width="1.1"/><circle cx="13" cy="10.4" r="3.3" fill="#1f8fd6"/><path d="M11.2 10.4 H14.6 M13.4 9 L14.8 10.4 L13.4 11.8" stroke="#fff" stroke-width="1"/></svg>
<div class="b" style="left:288px;top:717px;width:131px;height:30px;border:2px solid #16165e;border-radius:4px;"></div>
<span class="t" style="left:297.40px;top:721px;line-height:20px;font-size:11.5px;color:#0000e6;letter-spacing:-0.159px;text-decoration:underline;">Définir comme associé</span>
<svg class="b" style="left:1100px;top:761px;z-index:60;" width="14" height="14" viewBox="0 0 14 14" preserveAspectRatio="none" fill="none"><path d="M9 8.5 L12 5.5 M7.5 13.5 L12 9 M3.5 13.5 L8 9" stroke="#9c9c9c" stroke-width="1.1"/></svg>
</div></body></html>
